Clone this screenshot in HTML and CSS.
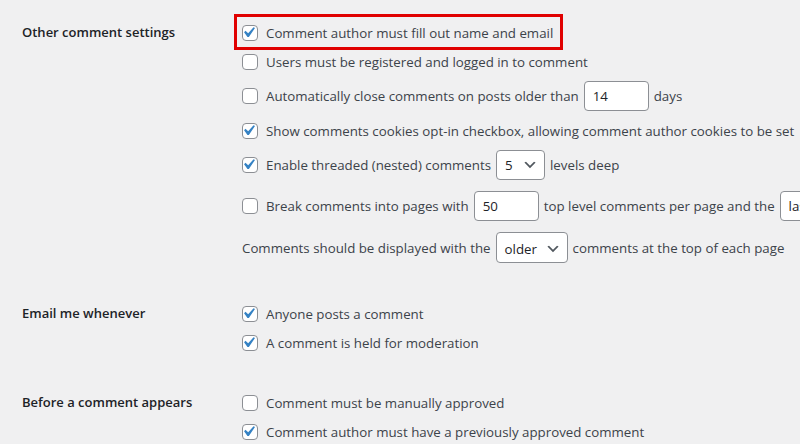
FILE: index.html
```
<!DOCTYPE html>
<html lang="en">
<head>
  <meta charset="UTF-8">
  <meta name="viewport" content="width=device-width, initial-scale=1.0">
  <title>Discussion Settings</title>
  <link rel="stylesheet" href="styles.css">
</head>
<body>
  <form class="settings">
    <div class="row row-other">
      <div class="row-title">Other comment settings</div>
      <div class="options">
        <label class="line highlight">
          <span class="cb checked"><svg viewBox="0 0 20 20"><path d="M14.83 4.89l1.34.94-5.81 8.38H9.02L5.78 9.67l1.34-1.25 2.57 2.4z"/></svg></span>
          <span>Comment author must fill out name and email</span>
        </label>
        <label class="line">
          <span class="cb"></span>
          <span>Users must be registered and logged in to comment</span>
        </label>
        <label class="line has-field">
          <span class="cb"></span>
          <span>Automatically close comments on posts older than</span>
          <span class="field num">14</span>
          <span>days</span>
        </label>
        <label class="line after-field">
          <span class="cb checked"><svg viewBox="0 0 20 20"><path d="M14.83 4.89l1.34.94-5.81 8.38H9.02L5.78 9.67l1.34-1.25 2.57 2.4z"/></svg></span>
          <span>Show comments cookies opt-in checkbox, allowing comment author cookies to be set</span>
        </label>
        <label class="line has-field">
          <span class="cb checked"><svg viewBox="0 0 20 20"><path d="M14.83 4.89l1.34.94-5.81 8.38H9.02L5.78 9.67l1.34-1.25 2.57 2.4z"/></svg></span>
          <span>Enable threaded (nested) comments</span>
          <span class="field select sel-depth">5<svg class="chev" viewBox="0 0 20 20"><path d="M5 6l5 5 5-5 2 1-7 7-7-7 2-1z"/></svg></span>
          <span>levels deep</span>
        </label>
        <label class="line has-field wide-gap">
          <span class="cb"></span>
          <span>Break comments into pages with</span>
          <span class="field num">50</span>
          <span>top level comments per page and the</span>
          <span class="field select sel-last">last<svg class="chev" viewBox="0 0 20 20"><path d="M5 6l5 5 5-5 2 1-7 7-7-7 2-1z"/></svg></span>
        </label>
        <label class="line has-field wide-gap">
          <span>Comments should be displayed with the</span>
          <span class="field select sel-order">older<svg class="chev" viewBox="0 0 20 20"><path d="M5 6l5 5 5-5 2 1-7 7-7-7 2-1z"/></svg></span>
          <span>comments at the top of each page</span>
        </label>
      </div>
    </div>

    <div class="row row-email">
      <div class="row-title">Email me whenever</div>
      <div class="options">
        <label class="line">
          <span class="cb checked"><svg viewBox="0 0 20 20"><path d="M14.83 4.89l1.34.94-5.81 8.38H9.02L5.78 9.67l1.34-1.25 2.57 2.4z"/></svg></span>
          <span>Anyone posts a comment</span>
        </label>
        <label class="line">
          <span class="cb checked"><svg viewBox="0 0 20 20"><path d="M14.83 4.89l1.34.94-5.81 8.38H9.02L5.78 9.67l1.34-1.25 2.57 2.4z"/></svg></span>
          <span>A comment is held for moderation</span>
        </label>
      </div>
    </div>

    <div class="row row-before">
      <div class="row-title">Before a comment appears</div>
      <div class="options">
        <label class="line">
          <span class="cb"></span>
          <span>Comment must be manually approved</span>
        </label>
        <label class="line">
          <span class="cb checked"><svg viewBox="0 0 20 20"><path d="M14.83 4.89l1.34.94-5.81 8.38H9.02L5.78 9.67l1.34-1.25 2.57 2.4z"/></svg></span>
          <span>Comment author must have a previously approved comment</span>
        </label>
      </div>
    </div>
  </form>
</body>
</html>
```
FILE: styles.css
```
:root {
  --bg: #f0f0f1;
  --text: #3c434a;
  --heading: #1d2327;
  --border: #8c8f94;
  --blue: #3582c4;
  --red: #e00000;
}

* {
  margin: 0;
  padding: 0;
  box-sizing: border-box;
}

body {
  font-family: 'Open Sans', sans-serif;
  font-size: 13.3px;
  color: var(--text);
  background: var(--bg);
  overflow: hidden;
  white-space: nowrap;
}

.settings {
  padding-left: 22px;
}

.row {
  display: grid;
  grid-template-columns: 220px 1fr;
}

.row-other { padding-top: 18px; }
.row-email { padding-top: 36px; }
.row-before { padding-top: 31px; }

.row-title {
  height: 29px;
  line-height: 29px;
  font-weight: 600;
  font-size: 13px;
  color: var(--heading);
}

.options {
  display: flex;
  flex-direction: column;
}

.line {
  display: flex;
  align-items: center;
  gap: 5px;
  min-height: 29px;
  align-self: flex-start;
}

.line.has-field {
  min-height: 30px;
  margin-top: 5px;
}

.line.after-field {
  margin-top: 5px;
}

.line.wide-gap {
  margin-top: 11px;
}

.line.highlight {
  position: relative;
}

.line.highlight::after {
  content: '';
  position: absolute;
  top: -4px;
  bottom: -3px;
  left: -8px;
  right: -10px;
  border: 3px solid var(--red);
}

.cb {
  position: relative;
  flex: none;
  width: 16px;
  height: 16px;
  margin-right: 3px;
  background: #fff;
  border: 1px solid var(--border);
  border-radius: 4px;
}

.cb svg {
  position: absolute;
  top: -4px;
  left: -5px;
  width: 21px;
  height: 21px;
  fill: var(--blue);
}

.field {
  display: flex;
  align-items: center;
  flex: none;
  height: 30px;
  padding: 0 8px;
  background: #fff;
  border: 1px solid var(--border);
  border-radius: 4px;
  color: var(--heading);
}

.num { width: 65px; }

.select {
  justify-content: space-between;
  padding-right: 6px;
}

.sel-depth { width: 49px; }
.sel-last { width: 60px; }
.sel-order { width: 72px; height: 31px; padding-top: 2px; }

.chev {
  width: 16px;
  height: 16px;
  fill: #50575e;
}
```
